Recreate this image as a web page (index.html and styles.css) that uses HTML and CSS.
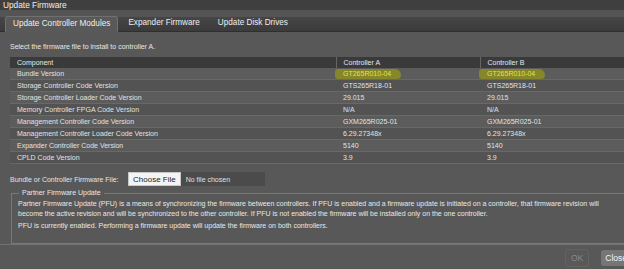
FILE: index.html
```html
<!DOCTYPE html>
<html>
<head>
<meta charset="utf-8">
<link rel="stylesheet" href="styles.css">
</head>
<body>
<div class="dialog">
  <div class="titlebar">Update Firmware</div>
  <div class="tabstrip">
    <div class="tab active">Update Controller Modules</div>
    <div class="tab">Expander Firmware</div>
    <div class="tab">Update Disk Drives</div>
  </div>
  <div class="content">
    <div class="intro">Select the firmware file to install to controller A.</div>
    <table class="grid">
      <colgroup><col class="c1"><col class="c2"><col class="c3"></colgroup>
      <thead>
        <tr><th>Component</th><th>Controller A</th><th>Controller B</th></tr>
      </thead>
      <tbody>
        <tr><td>Bundle Version</td><td><span class="hl">GT265R010-04</span></td><td><span class="hl">GT265R010-04</span></td></tr>
        <tr><td>Storage Controller Code Version</td><td>GTS265R18-01</td><td>GTS265R18-01</td></tr>
        <tr><td>Storage Controller Loader Code Version</td><td>29.015</td><td>29.015</td></tr>
        <tr><td>Memory Controller FPGA Code Version</td><td>N/A</td><td>N/A</td></tr>
        <tr><td>Management Controller Code Version</td><td>GXM265R025-01</td><td>GXM265R025-01</td></tr>
        <tr><td>Management Controller Loader Code Version</td><td>6.29.27348x</td><td>6.29.27348x</td></tr>
        <tr><td>Expander Controller Code Version</td><td>5140</td><td>5140</td></tr>
        <tr><td>CPLD Code Version</td><td>3.9</td><td>3.9</td></tr>
      </tbody>
    </table>
    <div class="filerow">
      <span class="filelabel">Bundle or Controller Firmware File:</span>
      <span class="filebox"><span class="choose">Choose File</span><span class="nofile">No file chosen</span></span>
    </div>
    <fieldset class="pfu">
      <legend>Partner Firmware Update</legend>
      <p>Partner Firmware Update (PFU) is a means of synchronizing the firmware between controllers. If PFU is enabled and a firmware update is initiated on a controller, that firmware revision will<br>become the active revision and will be synchronized to the other controller. If PFU is not enabled the firmware will be installed only on the one controller.</p>
      <p>PFU is currently enabled. Performing a firmware update will update the firmware on both controllers.</p>
    </fieldset>
  </div>
  <div class="buttonpane">
    <span class="btn disabled">OK</span>
    <span class="btn close">Close</span>
  </div>
</div>
</body>
</html>
```

FILE: styles.css
```css
html, body {
  margin: 0;
  padding: 0;
  width: 624px;
  height: 269px;
  overflow: hidden;
  background: #585858;
  font-family: "Liberation Sans", Arial, sans-serif;
  color: #e4e4e4;
}
.dialog {
  width: 624px;
  height: 269px;
  display: flex;
  flex-direction: column;
}
.titlebar {
  height: 10px;
  line-height: 10px;
  font-size: 8.3px;
  padding-left: 3px;
  background: #3f3f3f;
  color: #f0f0f0;
}
.tabstrip {
  height: 21px;
  display: flex;
  align-items: flex-end;
  background: linear-gradient(#545454 0, #545454 7px, #464646 7px, #3b3b3b 21px);
  border-bottom: 1px solid #2f2f2f;
}
.tab {
  height: 15px;
  line-height: 14px;
  font-size: 8.2px;
  padding: 0 8px;
  margin-left: 2px;
  color: #eeeeee;
  box-sizing: border-box;
}
.tab.active {
  margin-left: 5px;
  background: #595959;
  border: 1px solid #707070;
  border-bottom: none;
  border-radius: 3px 3px 0 0;
  height: 16px;
  margin-bottom: -1px;
  padding: 0 7px;
}
.content {
  padding-left: 10px;
  flex: 1;
}
.intro {
  font-size: 7px;
  line-height: 10px;
  margin-top: 10px;
  color: #e6e6e6;
}
.grid {
  margin-top: 5px;
  border-collapse: collapse;
  width: 640px;
  table-layout: fixed;
  font-size: 7px;
}
.grid .c1 { width: 326px; }
.grid .c2 { width: 144px; }
.grid .c3 { width: 170px; }
.grid th {
  background: #3a3a3a;
  color: #e8e8e8;
  font-weight: normal;
  text-align: left;
  height: 11px;
  padding: 0 0 0 7px;
  line-height: 11px;
  border-left: 1px solid #666;
}
.grid th:first-child { border-left: none; }
.grid td {
  height: 11px;
  line-height: 11px;
  padding: 0 0 0 7px;
  border-bottom: 1px solid #686868;
  color: #e2e2e2;
}
.grid tbody tr:nth-child(odd) td { background: #5c5c5c; }
.grid tbody tr:nth-child(even) td { background: #535353; }
.hl {
  background: #86862a;
  color: #e2e24a;
  padding: 1px 10px 2px 8px;
  margin-left: -8px;
  border-radius: 3px 6px 4px 3px;
}
.filerow {
  margin-top: 8px;
  height: 14px;
  display: flex;
  align-items: center;
  font-size: 7px;
}
.filelabel {
  width: 118px;
  color: #e4e4e4;
}
.filebox {
  display: flex;
  align-items: center;
  width: 137px;
  height: 14px;
  background: #4b4b4b;
}
.choose {
  background: #f4f4f4;
  color: #222;
  font-size: 8px;
  height: 14px;
  line-height: 14px;
  padding: 0 4px;
  box-sizing: border-box;
  border: 1px solid #c8c8c8;
}
.nofile {
  margin-left: 5px;
  color: #e0e0e0;
}
.pfu {
  margin: 2px 0 0 1px;
  padding: 1px 6px 6px 6px;
  border: 1px solid #787878;
  border-right: none;
  font-size: 7px;
  line-height: 10px;
  color: #e8e8e8;
  height: 47px;
  white-space: nowrap;
}
.pfu legend {
  padding: 0 3px;
  margin-left: 1px;
  color: #e8e8e8;
}
.pfu p {
  margin: 0 0 2px 0;
}
.buttonpane {
  height: 25px;
  border-top: 1px solid #727272;
  display: flex;
  justify-content: flex-end;
  align-items: center;
  padding-top: 1px;
  box-sizing: border-box;
}
.btn {
  font-size: 8.5px;
  height: 16px;
  line-height: 16px;
  padding: 0 5px;
  border-radius: 3px;
}
.btn.disabled {
  color: #888;
  background: #595959;
  border: 1px solid #636363;
  margin-right: 12px;
}
.btn.close {
  background: #767676;
  color: #f4f4f4;
  padding: 0 12px 0 4px;
  margin-right: -15px;
}
```
